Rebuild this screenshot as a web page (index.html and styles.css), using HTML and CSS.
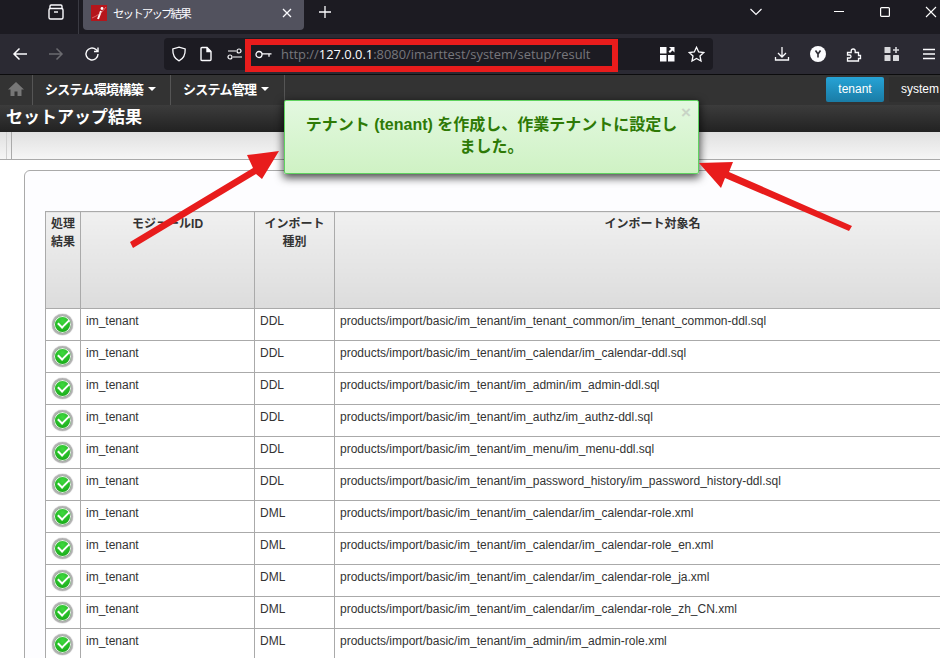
FILE: index.html
```html
<!DOCTYPE html>
<html>
	<head>
		<meta charset="utf-8">
		<title>セットアップ結果</title>
		<link rel="stylesheet" href="styles.css">
	</head>
	<body>
		<!--ブラウザのタブバー-->
		<div class="tabbar">
			<svg class="tabview" width="18" height="18" viewBox="0 0 18 18" fill="none" stroke="#fbfbfe" stroke-width="1.4"><path d="M3 5.5V3.2C3 2.5 3.5 2 4.2 2h9.6c.7 0 1.2.5 1.2 1.2v2.3"/><rect x="2" y="5.5" width="14" height="10.5" rx="1.5"/><path d="M7 9h4"/></svg>
			<div class="tabsep"></div>
			<div class="tab">
				<svg class="favicon" width="16" height="16" viewBox="0 0 16 16"><rect width="16" height="16" fill="#b5161c"/><path d="M7 14 10 6" stroke="#fff" stroke-width="2"/><circle cx="11" cy="3.5" r="1.4" fill="#fff"/><path d="M1 13C6 11 12 7 15 2" stroke="#e88" stroke-width=".7" fill="none"/></svg>
				<span class="tabtitle">セットアップ結果</span>
				<svg class="tabclose" width="10" height="10" viewBox="0 0 10 10" stroke="#fbfbfe" stroke-width="1.3"><path d="M1 1l8 8M9 1 1 9"/></svg>
			</div>
			<svg class="newtab" width="14" height="14" viewBox="0 0 14 14" stroke="#fbfbfe" stroke-width="1.3"><path d="M7 1v12M1 7h12"/></svg>
			<svg class="tablist" width="14" height="8" viewBox="0 0 14 8" fill="none" stroke="#fbfbfe" stroke-width="1.2"><path d="M1.500 1l5.500 5.500L12.500 1"/></svg>
			<div class="winbtns">
				<svg width="12" height="12" viewBox="0 0 12 12" stroke="#fff"><path d="M1 5.500h10"/></svg>
				<svg width="12" height="12" viewBox="0 0 12 12" fill="none" stroke="#fff" stroke-width="1.2"><rect x="1.600" y="1.600" width="8.800" height="8.800" rx="1"/></svg>
				<svg width="12" height="12" viewBox="0 0 12 12" stroke="#fff" stroke-width="1.1"><path d="M1 1l10 10M11 1 1 11"/></svg>
			</div>
		</div>

		<!--ツールバー-->
		<div class="toolbar">
			<svg class="back" width="16" height="16" viewBox="0 0 16 16" fill="none" stroke="#fbfbfe" stroke-width="1.5"><path d="M15 8H2M7.500 2.500 2 8l5.500 5.500"/></svg>
			<svg class="forward" width="16" height="16" viewBox="0 0 16 16" fill="none" stroke="#6b6b70" stroke-width="1.5"><path d="M1 8h13M8.500 2.500 14 8l-5.500 5.500"/></svg>
			<svg class="reload" width="16" height="16" viewBox="0 0 16 16" fill="none" stroke="#fbfbfe" stroke-width="1.4"><path d="M14 8a6 6 0 1 1-2-4.500L14 5.500"/><path d="M14 1.500v4h-4"/></svg>
			<div class="urlbar">
				<svg width="16" height="16" viewBox="0 0 16 16" fill="none" stroke="#fbfbfe" stroke-width="1.3"><path d="M8 1.200 14.200 3c.2 6-1.500 9.700-6.200 11.800C3.300 12.700 1.600 9 1.800 3z"/></svg>
				<svg class="docicon" width="14" height="16" viewBox="0 0 14 16" fill="none" stroke="#fbfbfe" stroke-width="1.4"><path d="M2 2.500C2 1.900 2.400 1.500 3 1.500h5l4 4v8c0 .6-.4 1-1 1H3c-.6 0-1-.4-1-1z"/><path d="M8 1.500v4h4" fill="#fbfbfe"/></svg>
				<svg class="sliders" width="16" height="14" viewBox="0 0 16 14" fill="none" stroke="#fbfbfe" stroke-width="1.2"><path d="M1 4h8M6 10h9"/><circle cx="12" cy="4" r="2"/><circle cx="3" cy="10" r="2"/></svg>
				<div class="urlfield">
					<svg width="17" height="9" viewBox="0 0 17 9" fill="none" stroke="#fbfbfe" stroke-width="1.3"><circle cx="4" cy="4.500" r="3"/><path d="M7 3.800h9.500M14 3.800v3"/></svg>
					<span class="urltext">http://<b>127.0.0.1</b>:8080/imarttest/system/setup/result</span>
				</div>
				<svg width="15" height="15" viewBox="0 0 15 15" fill="#fbfbfe"><rect width="6.500" height="6.500"/><rect y="8" width="6.500" height="6.500"/><rect x="8" y="8" width="6.500" height="6.500"/><path d="M9 0h5.500v5.500L12.500 3.500 10 6 8.500 4.500 11 2z"/></svg>
				<svg class="staricon" width="17" height="17" viewBox="0 0 17 17" fill="none" stroke="#fbfbfe" stroke-width="1.3"><path d="M8.500 1.300 10.700 6l5 .6-3.700 3.400 1 5-4.500-2.500L4 15l1-5L1.300 6.600l5-.6z"/></svg>
			</div>
			<div class="toolicons">
				<svg width="16" height="16" viewBox="0 0 16 16" fill="none" stroke="#fbfbfe" stroke-width="1.300"><path d="M8 1v10M4 7l4 4 4-4M1.500 11v3h13v-3"/></svg>
				<svg width="16" height="16" viewBox="0 0 16 16"><circle cx="8" cy="8" r="8" fill="#fbfbfe"/><path d="M5.500 4.500 8 8l2.500-3.500M8 8v3.500" fill="none" stroke="#2b2a33" stroke-width="1.600"/></svg>
				<svg width="16" height="16" viewBox="0 0 16 16" fill="none" stroke="#fbfbfe" stroke-width="1.300"><path d="M1.500 6.500h3.700V5a2 2 0 1 1 4 0v1.500h3.300v3h2v3h-2V15H1.500v-3h2a1.500 1.500 0 0 0 0-3h-2z"/></svg>
				<svg class="far" width="16" height="16" viewBox="0 0 16 16" fill="#d8d8dc"><rect x=".5" y="1" width="6" height="6" rx=".6"/><rect x=".5" y="9" width="6" height="6" rx=".6"/><rect x="9" y="9" width="6" height="6" rx=".6"/><path d="M11.200 1h1.600v2.200H15v1.600h-2.200V7h-1.600V4.800H9V3.200h2.200z"/></svg>
				<svg class="far" width="14" height="12" viewBox="0 0 14 12" stroke="#fbfbfe" stroke-width="1.300"><path d="M1 1.500h12M1 6h12M1 10.500h12"/></svg>
			</div>
		</div>

		<!--アプリのメニュー-->
		<div class="menubar">
			<div class="menuhome">
				<svg width="16" height="14" viewBox="0 0 16 14" fill="#777"><path d="M8 0 16 7.500h-2.500V14H9.500V9.500h-3V14H2.500V7.500H0z"/></svg>
			</div>
			<div class="menuitem m1">システム環境構築<i class="caret"></i></div>
			<div class="menuitem m2">システム管理<i class="caret"></i></div>
			<div class="tenantbtns">
				<span class="btn-tenant">tenant</span>
				<span class="btn-system">system</span>
			</div>
		</div>
		<div class="titlebar">セットアップ結果</div>
		<div class="subbar"><span class="subcell s1"></span><span class="subcell s2"></span></div>

		<div class="content">
			<div class="panel">
				<table class="result">
					<colgroup><col class="c1"><col class="c2"><col class="c3"><col></colgroup>
					<thead>
						<tr><th>処理<br>結果</th><th>モジュールID</th><th>インポート<br>種別</th><th>インポート対象名</th></tr>
					</thead>
					<tbody>
						<tr><td class="st"><i class="ok"></i></td><td>im_tenant</td><td>DDL</td><td>products/import/basic/im_tenant/im_tenant_common/im_tenant_common-ddl.sql</td></tr>
						<tr><td class="st"><i class="ok"></i></td><td>im_tenant</td><td>DDL</td><td>products/import/basic/im_tenant/im_calendar/im_calendar-ddl.sql</td></tr>
						<tr><td class="st"><i class="ok"></i></td><td>im_tenant</td><td>DDL</td><td>products/import/basic/im_tenant/im_admin/im_admin-ddl.sql</td></tr>
						<tr><td class="st"><i class="ok"></i></td><td>im_tenant</td><td>DDL</td><td>products/import/basic/im_tenant/im_authz/im_authz-ddl.sql</td></tr>
						<tr><td class="st"><i class="ok"></i></td><td>im_tenant</td><td>DDL</td><td>products/import/basic/im_tenant/im_menu/im_menu-ddl.sql</td></tr>
						<tr><td class="st"><i class="ok"></i></td><td>im_tenant</td><td>DDL</td><td>products/import/basic/im_tenant/im_password_history/im_password_history-ddl.sql</td></tr>
						<tr><td class="st"><i class="ok"></i></td><td>im_tenant</td><td>DML</td><td>products/import/basic/im_tenant/im_calendar/im_calendar-role.xml</td></tr>
						<tr><td class="st"><i class="ok"></i></td><td>im_tenant</td><td>DML</td><td>products/import/basic/im_tenant/im_calendar/im_calendar-role_en.xml</td></tr>
						<tr><td class="st"><i class="ok"></i></td><td>im_tenant</td><td>DML</td><td>products/import/basic/im_tenant/im_calendar/im_calendar-role_ja.xml</td></tr>
						<tr><td class="st"><i class="ok"></i></td><td>im_tenant</td><td>DML</td><td>products/import/basic/im_tenant/im_calendar/im_calendar-role_zh_CN.xml</td></tr>
						<tr><td class="st"><i class="ok"></i></td><td>im_tenant</td><td>DML</td><td>products/import/basic/im_tenant/im_admin/im_admin-role.xml</td></tr>
					</tbody>
				</table>
			</div>
		</div>

		<!--画面に重なるもの-->
		<div class="toast">
			<span class="toastclose">×</span>
			テナント (tenant) を作成し、作業テナントに設定しました。
		</div>
		<div class="redbox"></div>
		<svg class="arrows" width="940" height="658" viewBox="0 0 940 658" fill="#e81c1c">
			<path d="M130 242 253 168 247 155 279 151 262 179 256 174 133 248z"/>
			<path d="M852 226 729 172 733 162 699 163 721 188 725 178 849 231z"/>
		</svg>
	</body>
</html>
```

FILE: styles.css
```css
*{
	margin: 0px;
	padding: 0px;
	box-sizing: border-box;
}
html, body{
	width: 940px;
	height: 658px;
	overflow: hidden;
}
body{
	position: relative;
	display: flex;
	flex-direction: column;
	font-family: "Liberation Sans", "Noto Sans CJK JP", sans-serif;
	background-color: #fff;
}

/* タブバー */
.tabbar{
	flex: none;
	height: 34px;
	padding-bottom: 10px;
	background-color: #1c1b22;
	display: flex;
	align-items: center;
	color: #fbfbfe;
}
.tabview{
	margin-left: 47px;
}
.tabsep{
	align-self: flex-start;
	width: 1px;
	height: 34px;
	margin-left: 13px;
	background-color: #3a3a42;
}
.tab{
	align-self: flex-start;
	width: 221px;
	height: 30px;
	margin-left: 4px;
	border-radius: 0 0 4px 4px;
	background-color: #52525e;
	display: flex;
	align-items: center;
	padding: 0 12px 4px 8px;
}
.favicon{
	flex: none;
}
.tabtitle{
	flex: 1;
	margin-left: 6px;
	font-size: 11.5px;
	letter-spacing: -1.9px;
}
.newtab{
	margin-left: 14px;
}
.tablist{
	margin-left: 417px;
}
.winbtns{
	margin-left: auto;
	margin-right: 3px;
	display: flex;
	gap: 34px;
}

/* ツールバー */
.toolbar{
	flex: none;
	height: 41px;
	background-color: #2b2a33;
	border-bottom: 1px solid #0c0c0d;
	display: flex;
	align-items: center;
}
.back{
	margin-left: 12px;
}
.forward{
	margin-left: 20px;
}
.reload{
	margin-left: 20px;
}
.urlbar{
	width: 549px;
	height: 32px;
	margin-left: 64px;
	background-color: #1c1b22;
	border-radius: 4px;
	display: flex;
	align-items: center;
	padding: 0 8px 0 7px;
}
.docicon{
	margin-left: 12px;
}
.sliders{
	margin-left: 14px;
}
.urlfield{
	flex: 1;
	display: flex;
	align-items: center;
	margin-left: 12px;
}
.urltext{
	margin-left: 9px;
	font-family: "Open Sans", "Liberation Sans", sans-serif;
	font-size: 12.9px;
	color: #77777c;
	white-space: nowrap;
}
.urltext b{
	font-weight: normal;
	color: #fbfbfe;
}
.staricon{
	margin-left: 13px;
}
.toolicons{
	margin-left: 61px;
	display: flex;
	align-items: center;
	gap: 20px;
}
.toolicons .far{
	margin-left: 2px;
}

/* メニュー */
.menubar{
	flex: none;
	height: 30px;
	background-color: #333;
	display: flex;
	align-items: stretch;
	color: #fff;
}
.menuhome{
	width: 33px;
	padding-bottom: 3px;
	border-right: 1px solid #555;
	display: flex;
	align-items: center;
	justify-content: center;
}
.menuitem{
	display: flex;
	align-items: center;
	padding: 0 0 3px 12px;
	border-right: 1px solid #555;
	font-weight: bold;
	font-size: 13px;
	letter-spacing: -0.7px;
}
.m1{
	width: 138px;
}
.m2{
	width: 114px;
}
.caret{
	width: 0;
	height: 0;
	margin-left: 5px;
	border-style: solid;
	border-width: 4px 4px 0 4px;
	border-color: #fff transparent transparent transparent;
}
.tenantbtns{
	margin-left: auto;
	display: flex;
	align-items: center;
	gap: 5px;
	padding-bottom: 1px;
	font-size: 12px;
}
.btn-tenant{
	width: 58px;
	height: 25px;
	line-height: 25px;
	text-align: center;
	border-radius: 2px;
	background: linear-gradient(#26a3d6, #1a7ca6);
}
.btn-system{
	width: 51px;
	height: 25px;
	line-height: 25px;
	padding-left: 12px;
	background-color: #2f2f2f;
	border-radius: 2px 0 0 2px;
	overflow: hidden;
}
.titlebar{
	flex: none;
	height: 27px;
	padding-left: 6px;
	line-height: 26px;
	font-size: 17px;
	font-weight: bold;
	color: #fff;
	background: linear-gradient(#3c3c3c, #222);
}
.subbar{
	flex: none;
	height: 28px;
	display: flex;
	background: linear-gradient(#e0e0e0, #f6f6f6);
	border-bottom: 1px solid #aaa;
}
.subcell{
	display: block;
	height: 100%;
}
.s1{
	width: 7px;
	border-right: 1px solid #d0d0d0;
}
.s2{
	width: 5px;
	border-right: 1px solid #aaa;
}

/* 本文 */
.content{
	flex: 1;
	overflow: hidden;
	padding: 10px 0 0 24px;
}
.panel{
	width: 1000px;
	height: 600px;
	padding: 40px 20px;
	border: 1px solid #aaa;
	border-radius: 6px 0 0 0;
	background-color: #fdfdff;
}
.result{
	width: 926px;
	table-layout: fixed;
	border-collapse: collapse;
	font-size: 12px;
	color: #333;
}
.c1{
	width: 35px;
}
.c2{
	width: 174px;
}
.c3{
	width: 80px;
}
.result th, .result td{
	border: 1px solid #aaa;
	vertical-align: top;
}
.result th{
	height: 97px;
	padding: 3px 5px;
	line-height: 18px;
	font-weight: bold;
	text-align: center;
	background: linear-gradient(#f0f0f0, #dcdcdc);
}
.result td{
	height: 32px;
	padding: 4px 5px;
	line-height: 16px;
	background-color: #fff;
}
.result td.st{
	padding: 5px 0 0 6px;
	line-height: 0;
}
.ok{
	display: block;
	width: 21px;
	height: 21px;
	border-radius: 50%;
	border: 2px solid #b0b0b0;
	background: radial-gradient(circle at 50% 30%, #3fd83f, #0c9e0c);
	position: relative;
	box-shadow: inset 0 0 0 1px #eee, 0 0 1px #555;
}
.ok::after{
	content: "";
	position: absolute;
	left: 4px;
	top: 3px;
	width: 9px;
	height: 5px;
	border-left: 2.5px solid #fff;
	border-bottom: 2.5px solid #fff;
	transform: rotate(-45deg);
}

/* トースト */
.toast{
	position: absolute;
	left: 284px;
	top: 100px;
	width: 415px;
	height: 74px;
	padding: 13px 20px 0;
	text-align: center;
	font-size: 16px;
	line-height: 22px;
	font-weight: bold;
	color: #2e7a06;
	background: linear-gradient(#e3f8e0, #cff2c4);
	border: 1px solid #5fd35f;
	border-radius: 2px;
	box-shadow: 0 3px 8px 1px rgba(0,0,0,0.7);
}
.toastclose{
	position: absolute;
	right: 7px;
	top: 2px;
	font-size: 17px;
	line-height: 20px;
	color: #c8d4c6;
}
.redbox{
	position: absolute;
	left: 245px;
	top: 39px;
	width: 373px;
	height: 33px;
	border: 6px solid #e81c1c;
}
.arrows{
	position: absolute;
	left: 0;
	top: 0;
	pointer-events: none;
}
```
